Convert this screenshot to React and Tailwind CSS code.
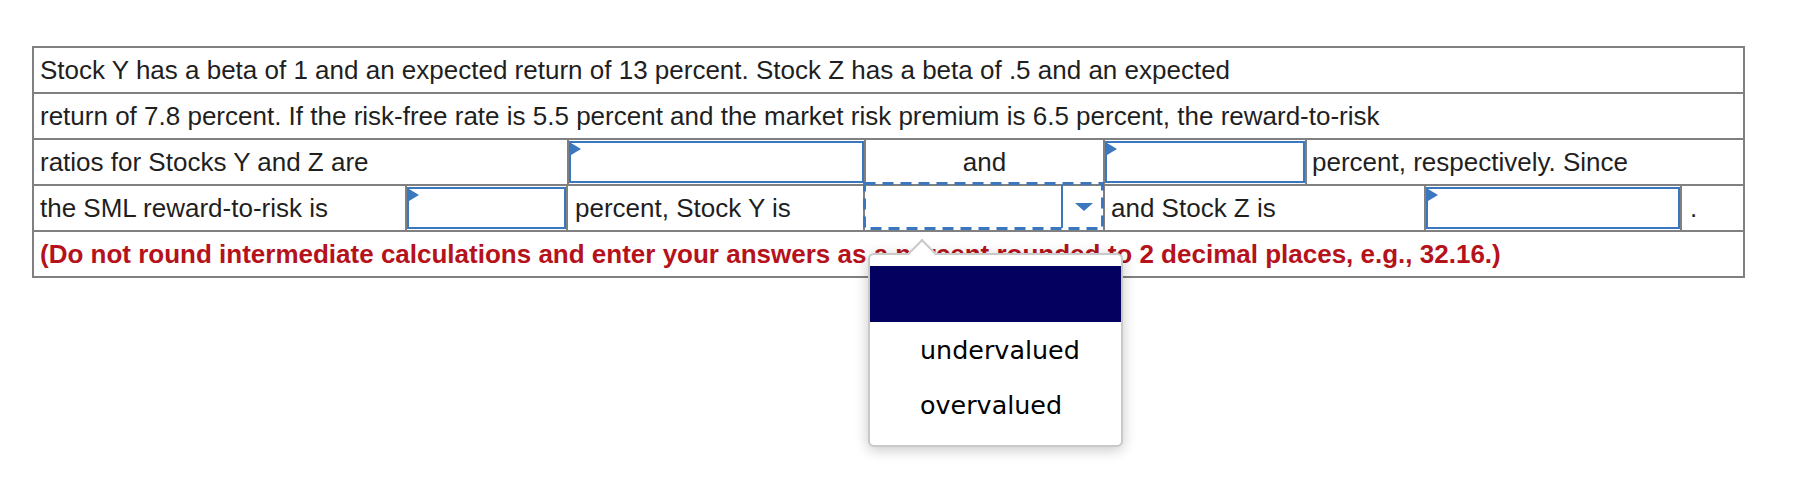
import React from "react";

const blue = "border-[#3a77bf]";

function Flag() {
  return (
    <span className="absolute left-0 top-0 h-0 w-0 border-t-[6px] border-b-[6px] border-l-[10px] border-t-transparent border-b-transparent border-l-[#3a77bf]" />
  );
}

function InputBox() {
  return (
    <div className={`relative h-full w-full border-2 ${blue} bg-white`}>
      <Flag />
    </div>
  );
}

export default function App() {
  return (
    <div className="relative h-[484px] w-[1801px] bg-white pl-[32px] pt-[46px] font-['Liberation_Sans',Arial,sans-serif] text-[26px] leading-[30px] text-[#1f1f1f]">
      <div className="w-[1713px] border-2 border-[#808080]">
        {/* row 1 */}
        <div className="flex h-[44px] items-center whitespace-nowrap pl-[6px]">
          Stock Y has a beta of 1 and an expected return of 13 percent. Stock Z has a beta of .5 and an expected
        </div>
        {/* row 2 */}
        <div className="flex h-[46px] items-center whitespace-nowrap border-t-2 border-[#808080] pl-[6px]">
          return of 7.8 percent. If the risk-free rate is 5.5 percent and the market risk premium is 6.5 percent, the reward-to-risk
        </div>
        {/* row 3 */}
        <div className="flex h-[46px] whitespace-nowrap border-t-2 border-[#808080]">
          <div className="flex w-[533px] items-center pl-[6px]">ratios for Stocks Y and Z are</div>
          <div className="w-[297px] border-l-2 border-[#808080] py-px">
            <InputBox />
          </div>
          <div className="flex w-[239px] items-center justify-center border-l-2 border-[#808080]">and</div>
          <div className="w-[202px] border-l-2 border-[#808080] py-px">
            <InputBox />
          </div>
          <div className="flex flex-1 items-center border-l-2 border-[#808080] pl-[5px]">percent, respectively. Since</div>
        </div>
        {/* row 4 */}
        <div className="flex h-[46px] whitespace-nowrap border-t-2 border-[#808080]">
          <div className="flex w-[371px] items-center pl-[6px]">the SML reward-to-risk is</div>
          <div className="w-[161px] border-l-2 border-[#808080] py-px">
            <InputBox />
          </div>
          <div className="flex w-[297px] items-center border-l-2 border-[#808080] pl-[7px]">percent, Stock Y is</div>
          <div className="relative w-[240px] border-l-2 border-[#808080]">
            <svg className="absolute -left-[2px] -top-[4px]" width="241" height="48" viewBox="0 0 241 48">
              <rect x="1.5" y="1.5" width="238" height="45" fill="none" stroke="#3a77bf" strokeWidth="3" strokeDasharray="11 7" />
            </svg>
            <div className="absolute left-[196px] -top-[1px] bottom-[2px] w-[2px] bg-[#3a77bf]" />
            <div className="absolute left-[210px] top-[17px] h-0 w-0 border-l-[9px] border-r-[9px] border-t-[8px] border-l-transparent border-r-transparent border-t-[#3a77bf]" />
          </div>
          <div className="flex w-[321px] items-center border-l-2 border-[#808080] pl-[6px]">and Stock Z is</div>
          <div className="w-[256px] border-l-2 border-[#808080] py-px">
            <InputBox />
          </div>
          <div className="flex flex-1 items-center border-l-2 border-[#808080] pl-[8px]">.</div>
        </div>
        {/* row 5 */}
        <div className="flex h-[46px] items-center whitespace-nowrap border-t-2 border-[#808080] pl-[6px] font-bold text-[#b5121b]">
          (Do not round intermediate calculations and enter your answers as a percent rounded to 2 decimal places, e.g., 32.16.)
        </div>
      </div>

      {/* dropdown popup */}
      <div className="absolute left-[868px] top-[253px] h-[194px] w-[255px] rounded-md border-2 border-[#c9c9c9] bg-white font-['DejaVu_Sans',sans-serif] text-[25.4px] leading-[30px] text-black shadow-[0_3px_14px_rgba(0,0,0,0.22)]">
        <div className="absolute left-[42px] -top-[12px] z-10 h-[20px] w-[20px] rotate-45 border-l-2 border-t-2 border-[#c9c9c9] bg-white" />
        <div className="relative z-20 mt-[11px] h-[56px] bg-[#03005f]" />
        <div className="flex h-[55px] items-center pl-[50px]">undervalued</div>
        <div className="flex h-[55px] items-center pl-[50px]">overvalued</div>
      </div>
    </div>
  );
}
